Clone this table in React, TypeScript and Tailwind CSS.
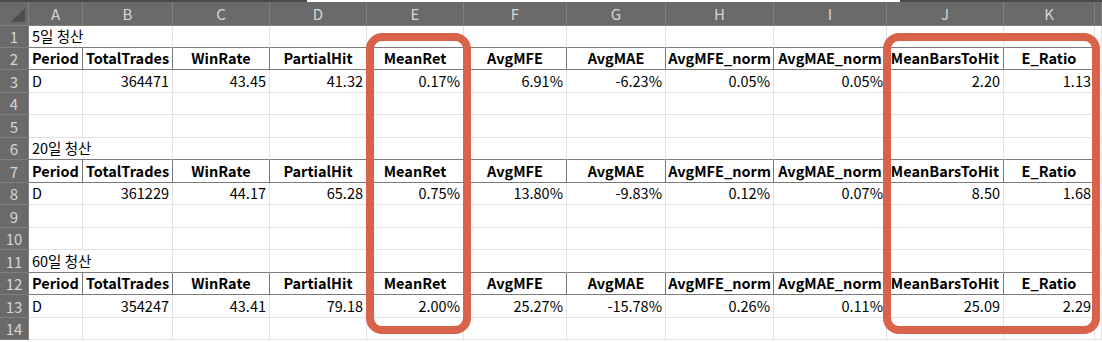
import React from "react";

const FONT = "font-['Noto_Sans_CJK_KR',sans-serif]";

const letters = ["A", "B", "C", "D", "E", "F", "G", "H", "I", "J", "K", ""];

const rowHeights = [22, 22, 23, 22, 23, 22, 23, 22, 23, 22, 23, 22, 23, 22];

const headers = [
  "Period",
  "TotalTrades",
  "WinRate",
  "PartialHit",
  "MeanRet",
  "AvgMFE",
  "AvgMAE",
  "AvgMFE_norm",
  "AvgMAE_norm",
  "MeanBarsToHit",
  "E_Ratio",
];

const sections = [
  {
    title: "5일 청산",
    values: ["D", "364471", "43.45", "41.32", "0.17%", "6.91%", "-6.23%", "0.05%", "0.05%", "2.20", "1.13"],
  },
  {
    title: "20일 청산",
    values: ["D", "361229", "44.17", "65.28", "0.75%", "13.80%", "-9.83%", "0.12%", "0.07%", "8.50", "1.68"],
  },
  {
    title: "60일 청산",
    values: ["D", "354247", "43.41", "79.18", "2.00%", "25.27%", "-15.78%", "0.26%", "0.11%", "25.09", "2.29"],
  },
];

// which sheet row holds what
function rowKind(row: number) {
  const offset = (row - 1) % 5;
  const section = Math.floor((row - 1) / 5);
  if (section > 2) return { kind: "empty" as const, section };
  if (offset === 0) return { kind: "title" as const, section };
  if (offset === 1) return { kind: "header" as const, section };
  if (offset === 2) return { kind: "data" as const, section };
  return { kind: "empty" as const, section };
}

function Cell({ row, col }: { row: number; col: number }) {
  const { kind, section } = rowKind(row);
  const inTable = col < 11;
  const height = rowHeights[row - 1];

  // the title text runs over into column B, so that cell spans both
  if (kind === "title" && col === 1) return null;

  let border = "border-r border-b border-[#e1e1e1]";
  if (inTable && kind === "title") border = "border-r border-r-[#e1e1e1] border-b border-b-[#7a7a7a]";
  if (inTable && kind === "header") border = "border-r border-b border-[#7a7a7a]";

  let content: React.ReactNode = null;
  let align = "justify-end";
  let span = "";

  if (kind === "title" && col === 0) {
    content = <span className="whitespace-nowrap">{sections[section].title}</span>;
    align = "justify-start";
    span = "col-span-2";
  }
  if (kind === "header" && inTable) {
    content = <span className="font-bold whitespace-nowrap">{headers[col]}</span>;
    align = "justify-center";
  }
  if (kind === "data" && inTable) {
    content = <span className="whitespace-nowrap">{sections[section].values[col]}</span>;
    align = col === 0 ? "justify-start" : "justify-end";
  }

  return (
    <div
      className={`flex items-center overflow-visible px-[3px] text-[14.5px] leading-none text-black ${border} ${align} ${span}`}
      style={{ height }}
    >
      {content}
    </div>
  );
}

export default function App() {
  return (
    <div className={`relative h-[342px] w-[1102px] overflow-hidden bg-white ${FONT}`}>
      <div className="flex h-[2px]">
        <div className="w-[307px] bg-[#4a4a4a]" />
        <div className="w-[593px] bg-white" />
        <div className="flex-1 bg-[#4a4a4a]" />
      </div>

      <div className="grid grid-cols-[29px_54px_90px_97px_97px_97px_103px_99px_108px_113px_117px_91px_1fr]">
        {/* corner */}
        <div className="relative h-[24px] border-r border-b border-[#7f7f7f] bg-[#6a6a6a]">
          <svg className="absolute right-[3px] bottom-[3px]" width="14" height="14" viewBox="0 0 14 14">
            <polygon points="14,0 14,14 0,14" fill="#4d4d4d" />
          </svg>
        </div>
        {letters.map((l, i) => (
          <div
            key={l + i}
            className="flex h-[24px] items-center justify-center border-r border-b border-[#7f7f7f] bg-[#6a6a6a] pt-[1px] text-[15px] text-[#d6d6d6]"
          >
            {l}
          </div>
        ))}

        {rowHeights.map((h, r) => (
          <React.Fragment key={r}>
            <div
              className="flex items-center justify-center border-r border-b border-[#7f7f7f] bg-[#6a6a6a] text-[15px] leading-none text-[#d6d6d6]"
              style={{ height: h }}
            >
              {r + 1}
            </div>
            {letters.map((_, c) => (
              <Cell key={c} row={r + 1} col={c} />
            ))}
          </React.Fragment>
        ))}
      </div>

      {/* annotation boxes */}
      <div className="pointer-events-none absolute top-[33px] left-[366px] h-[301px] w-[105px] rounded-[16px] border-[8px] border-[#d8634a]" />
      <div className="pointer-events-none absolute top-[33px] left-[883px] h-[301px] w-[217px] rounded-[16px] border-[8px] border-[#d8634a]" />
    </div>
  );
}
